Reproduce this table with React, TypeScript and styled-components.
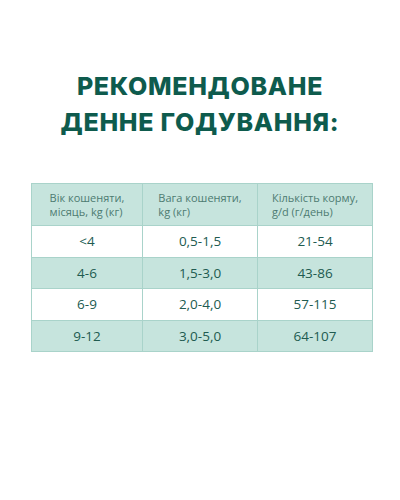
import styled, { createGlobalStyle } from "styled-components";

const GlobalStyle = createGlobalStyle`
  html, body {
    margin: 0;
    padding: 0;
    background: #ffffff;
  }
`;

const Page = styled.div`
  width: 400px;
  height: 500px;
  padding-top: 68px;
  box-sizing: border-box;
  font-family: "Open Sans", "Noto Sans", sans-serif;
`;

const Title = styled.h1`
  margin: 0;
  font-family: Inter, "Noto Sans", sans-serif;
  font-weight: 800;
  font-size: 25px;
  line-height: 36px;
  letter-spacing: 0.7px;
  color: #0e5b4d;
  text-align: center;
  text-transform: uppercase;
`;

const Table = styled.table`
  margin: 43px 0 0 31px;
  width: 341px;
  border-collapse: collapse;
  table-layout: fixed;
`;

const HeadCell = styled.th`
  height: 41px;
  padding: 0 4px;
  background: #c6e4dd;
  border: 1px solid #a9d3ca;
  font-weight: 400;
  font-size: 11px;
  line-height: 14px;
  color: #4d7b71;
  text-align: center;
  vertical-align: middle;
`;

const HeadText = styled.span`
  display: inline-block;
  text-align: left;
`;

const Row = styled.tr<{ $shaded: boolean }>`
  background: ${({ $shaded }) => ($shaded ? "#c6e4dd" : "#ffffff")};
`;

const Cell = styled.td`
  height: 30.5px;
  padding: 0;
  border: 1px solid #a9d3ca;
  font-size: 13.5px;
  color: #215b50;
  text-align: center;
  vertical-align: middle;
`;

const headers = [
  ["Вік кошеняти,", "місяць, kg (кг)"],
  ["Вага кошеняти,", "kg (кг)"],
  ["Кількість корму,", "g/d (г/день)"],
];

const rows = [
  ["<4", "0,5-1,5", "21-54"],
  ["4-6", "1,5-3,0", "43-86"],
  ["6-9", "2,0-4,0", "57-115"],
  ["9-12", "3,0-5,0", "64-107"],
];

export default function App() {
  return (
    <>
      <GlobalStyle />
      <Page>
        <Title>
          Рекомендоване
          <br />
          денне годування:
        </Title>
        <Table>
          <colgroup>
            <col style={{ width: 111 }} />
            <col style={{ width: 115 }} />
            <col style={{ width: 115 }} />
          </colgroup>
          <thead>
            <tr>
              {headers.map(([a, b]) => (
                <HeadCell key={a}>
                  <HeadText>
                    {a}
                    <br />
                    {b}
                  </HeadText>
                </HeadCell>
              ))}
            </tr>
          </thead>
          <tbody>
            {rows.map((r, i) => (
              <Row key={r[0]} $shaded={i % 2 === 1}>
                {r.map((v) => (
                  <Cell key={v}>{v}</Cell>
                ))}
              </Row>
            ))}
          </tbody>
        </Table>
      </Page>
    </>
  );
}
